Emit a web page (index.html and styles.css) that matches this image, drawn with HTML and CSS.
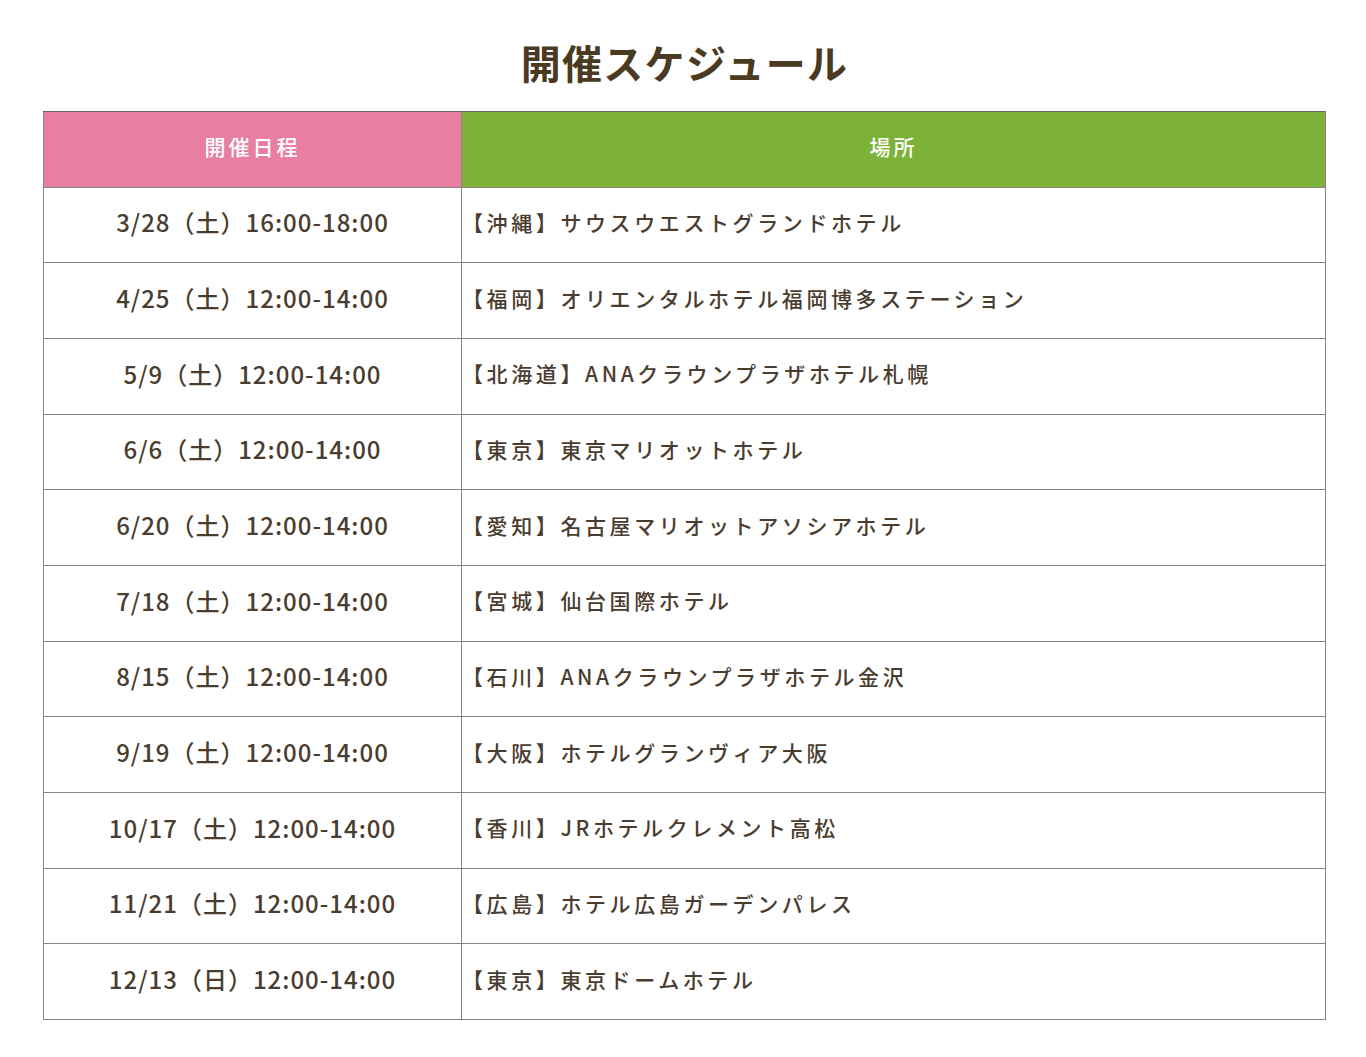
FILE: index.html
```html
<!DOCTYPE html>
<html lang="ja">
<head>
<meta charset="utf-8">
<title>開催スケジュール</title>
<link rel="stylesheet" href="styles.css">
</head>
<body>
<main class="schedule">
  <h1 class="schedule-title">開催スケジュール</h1>
  <table class="schedule-table">
    <thead>
      <tr>
        <th class="col-date">開催日程</th>
        <th class="col-place">場所</th>
      </tr>
    </thead>
    <tbody>
      <tr><td class="date">3/28（土）16:00-18:00</td><td class="place">【沖縄】サウスウエストグランドホテル</td></tr>
      <tr><td class="date">4/25（土）12:00-14:00</td><td class="place">【福岡】オリエンタルホテル福岡博多ステーション</td></tr>
      <tr><td class="date">5/9（土）12:00-14:00</td><td class="place">【北海道】ANAクラウンプラザホテル札幌</td></tr>
      <tr><td class="date">6/6（土）12:00-14:00</td><td class="place">【東京】東京マリオットホテル</td></tr>
      <tr><td class="date">6/20（土）12:00-14:00</td><td class="place">【愛知】名古屋マリオットアソシアホテル</td></tr>
      <tr><td class="date">7/18（土）12:00-14:00</td><td class="place">【宮城】仙台国際ホテル</td></tr>
      <tr><td class="date">8/15（土）12:00-14:00</td><td class="place">【石川】ANAクラウンプラザホテル金沢</td></tr>
      <tr><td class="date">9/19（土）12:00-14:00</td><td class="place">【大阪】ホテルグランヴィア大阪</td></tr>
      <tr><td class="date">10/17（土）12:00-14:00</td><td class="place">【香川】JRホテルクレメント高松</td></tr>
      <tr><td class="date">11/21（土）12:00-14:00</td><td class="place">【広島】ホテル広島ガーデンパレス</td></tr>
      <tr><td class="date">12/13（日）12:00-14:00</td><td class="place">【東京】東京ドームホテル</td></tr>
    </tbody>
  </table>
</main>
</body>
</html>
```
FILE: styles.css
```css
html, body {
  margin: 0;
  padding: 0;
  background: #ffffff;
}
body {
  font-family: "Noto Sans CJK JP", "Noto Sans", sans-serif;
  color: #4a3d30;
}
.schedule {
  padding: 32px 40px 0 43px;
}
.schedule-title {
  margin: 0 0 19px 0;
  font-size: 40px;
  line-height: 60px;
  font-weight: 700;
  text-align: center;
  color: #4b3a22;
  letter-spacing: 1.3px;
}
.schedule-table {
  width: 1283px;
  border-collapse: collapse;
  table-layout: fixed;
}
.schedule-table th,
.schedule-table td {
  border: 1px solid #8b837b;
  height: 68.67px;
  padding: 0 0 6px 0;
  vertical-align: middle;
}
.schedule-table th {
  color: #ffffff;
  font-size: 21px;
  font-weight: 500;
  letter-spacing: 3px;
  text-align: center;
  border-top-color: #6e6257;
}
.col-date {
  width: 417px;
  background: #e87fa3;
}
.col-place {
  background: #7cb238;
}
.date {
  text-align: center;
  font-size: 24px;
  font-weight: 500;
  letter-spacing: 1px;
}
.schedule-table .place {
  text-align: left;
  padding-left: 0;
  font-size: 21px;
  font-weight: 500;
  letter-spacing: 3.6px;
}
```
